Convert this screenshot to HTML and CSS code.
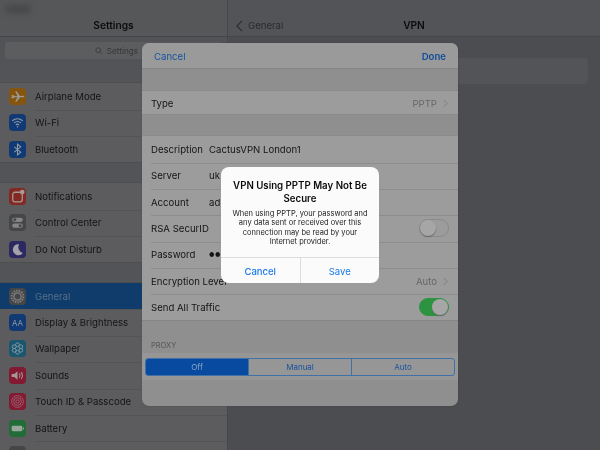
FILE: index.html
```html
<!DOCTYPE html>
<html lang="en">
<head>
<meta charset="utf-8">
<title>VPN Settings</title>
<link rel="stylesheet" href="styles.css">
</head>
<body>
<div class="screen">
  <aside class="sidebar">
    <div class="blob blob-left"></div>
    <header class="bar"><span class="bar-title">Settings</span></header>
    <div class="search-band">
      <div class="search">
        <svg class="search-icon" viewBox="0 0 10 10"><circle cx="4" cy="4" r="3" fill="none" stroke="#3a3a3c" stroke-width="1"/><path d="M6.2 6.2 9 9" stroke="#3a3a3c" stroke-width="1"/></svg>
        <span>Settings</span>
      </div>
    </div>
    <ul class="group">
      <li class="item"><span class="ico c-orange"><svg viewBox="0 0 16 16"><path d="M2 7l2-.3 1.4 1L8 7.600 5.800 3h1.300l3.300 4.500 2.600-.1c1 0 1.500.3 1.500.7s-.5.7-1.500.7l-2.600-.1L7.100 13H5.800L8 8.500l-2.600.2-1.400 1-2-.4 1-1.200z" fill="#9c9a94"/></svg></span><span class="lbl">Airplane Mode</span></li>
      <li class="item"><span class="ico c-blue"><svg viewBox="0 0 16 16" fill="none" stroke="#909ba6" stroke-width="1"><path d="M3 6.500c3-2.600 7-2.600 10 0M4.700 8.400c2-1.700 4.600-1.700 6.600 0M6.400 10.200c1-.8 2.200-.8 3.200 0"/><circle cx="8" cy="12" r=".7" fill="#909ba6" stroke="none"/></svg></span><span class="lbl">Wi-Fi</span></li>
      <li class="item"><span class="ico c-blue"><svg viewBox="0 0 16 16" fill="none" stroke="#909ba6" stroke-width="1"><path d="M5 5.500l6 5-3 2.500V3l3 2.500-6 5"/></svg></span><span class="lbl">Bluetooth</span></li>
    </ul>
    <ul class="group">
      <li class="item"><span class="ico c-red"><svg viewBox="0 0 16 16"><rect x="3.500" y="4" width="9" height="9" rx="2" fill="none" stroke="#a59a98" stroke-width="1.200"/><circle cx="12.500" cy="3.800" r="2.200" fill="#a59a98"/></svg></span><span class="lbl">Notifications</span></li>
      <li class="item"><span class="ico c-grey"><svg viewBox="0 0 16 16"><rect x="3" y="3.500" width="10" height="4" rx="2" fill="#858585"/><circle cx="5.500" cy="5.500" r="1.400" fill="#47484b"/><rect x="3" y="9" width="10" height="4" rx="2" fill="#858585"/><circle cx="10.500" cy="11" r="1.400" fill="#47484b"/></svg></span><span class="lbl">Control Center</span></li>
      <li class="item"><span class="ico c-indigo"><svg viewBox="0 0 16 16"><path d="M9.500 3a5.200 5.200 0 1 0 3.600 8.200A5.500 5.500 0 0 1 9.500 3z" fill="#a3a2aa"/></svg></span><span class="lbl">Do Not Disturb</span></li>
    </ul>
    <ul class="group">
      <li class="item item-active"><span class="ico c-grey"><svg viewBox="0 0 16 16" fill="none" stroke="#808080"><circle cx="8" cy="8" r="3.400" stroke-width="1.200"/><circle cx="8" cy="8" r="5.500" stroke-width="1.800" stroke-dasharray="1.400 1"/></svg></span><span class="lbl">General</span></li>
      <li class="item"><span class="ico c-blue"><svg viewBox="0 0 16 16"><text x="8" y="11" text-anchor="middle" class="ico-text" fill="#9099a5">AA</text></svg></span><span class="lbl">Display &amp; Brightness</span></li>
      <li class="item"><span class="ico c-teal"><svg viewBox="0 0 16 16" fill="none" stroke="#7f979f" stroke-width=".9"><circle cx="8" cy="4.500" r="1.800"/><circle cx="8" cy="11.500" r="1.800"/><circle cx="4.900" cy="6.300" r="1.800"/><circle cx="11.100" cy="6.300" r="1.800"/><circle cx="4.900" cy="9.700" r="1.800"/><circle cx="11.100" cy="9.700" r="1.800"/></svg></span><span class="lbl">Wallpaper</span></li>
      <li class="item"><span class="ico c-crimson"><svg viewBox="0 0 16 16"><path d="M2.500 6.500H5L8 4v8L5 9.500H2.500z" fill="#a5979a"/><path d="M9.800 6c.8 1.200.8 2.800 0 4M11.500 4.800c1.400 2 1.400 4.400 0 6.400" fill="none" stroke="#a5979a"/></svg></span><span class="lbl">Sounds</span></li>
      <li class="item"><span class="ico c-crimson"><svg viewBox="0 0 16 16" fill="none" stroke="#9a6270" stroke-width=".9"><circle cx="8" cy="8" r="5.500"/><circle cx="8" cy="8" r="3.600"/><circle cx="8" cy="8" r="1.600"/></svg></span><span class="lbl">Touch ID &amp; Passcode</span></li>
      <li class="item"><span class="ico c-green"><svg viewBox="0 0 16 16"><rect x="2.500" y="5.500" width="10" height="5" rx="1" fill="#9aa69a"/><rect x="13" y="7" width="1" height="2" fill="#9aa69a"/></svg></span><span class="lbl">Battery</span></li>
      <li class="item"><span class="ico c-grey"></span></li>
    </ul>
  </aside>

  <main class="detail">
    <div class="blob blob-right"></div>
    <header class="bar detail-bar">
      <span class="back"><svg class="back-chevron" viewBox="0 0 8 14"><path d="M7 1 1 7l6 6" fill="none" stroke="#2e2f31" stroke-width="1.500"/></svg>General</span>
      <span class="bar-title">VPN</span>
    </header>
    <div class="detail-row"></div>
  </main>

  <section class="sheet">
    <header class="sheet-nav"><span class="link">Cancel</span><span class="link link-strong">Done</span></header>
    <div class="sheet-row sheet-type"><span class="field">Type</span><span class="value">PPTP<svg class="chev" viewBox="0 0 6 10"><path d="M1 1l4 4-4 4" fill="none" stroke="#777" stroke-width="1"/></svg></span></div>
    <div class="sheet-group">
      <div class="sheet-row"><span class="field">Description</span><span class="entry">CactusVPN London1</span></div>
      <div class="sheet-row"><span class="field">Server</span><span class="entry">uk</span></div>
      <div class="sheet-row"><span class="field">Account</span><span class="entry">ad</span></div>
      <div class="sheet-row"><span class="field">RSA SecurID</span><span class="switch"><span class="knob"></span></span></div>
      <div class="sheet-row"><span class="field">Password</span><span class="entry entry-dots">●●</span></div>
      <div class="sheet-row"><span class="field">Encryption Level</span><span class="value">Auto<svg class="chev" viewBox="0 0 6 10"><path d="M1 1l4 4-4 4" fill="none" stroke="#777" stroke-width="1"/></svg></span></div>
      <div class="sheet-row"><span class="field">Send All Traffic</span><span class="switch switch-on"><span class="knob"></span></span></div>
    </div>
    <div class="proxy-label">PROXY</div>
    <div class="proxy-band">
      <div class="segments">
        <span class="seg seg-on">Off</span><span class="seg">Manual</span><span class="seg">Auto</span>
      </div>
    </div>
  </section>

  <section class="alert">
    <div class="alert-body">
      <h2 class="alert-title">VPN Using PPTP May Not Be Secure</h2>
      <p class="alert-text">When using PPTP, your password and any data sent or received over this connection may be read by your Internet provider.</p>
    </div>
    <div class="alert-actions"><span class="action">Cancel</span><span class="action">Save</span></div>
  </section>
</div>
</body>
</html>
```
FILE: styles.css
```css
* { box-sizing: border-box; }
html, body { margin: 0; padding: 0; background: #4c4d50; }
body { font-family: Inter, "Liberation Sans", sans-serif; }
ul { list-style: none; margin: 0; padding: 0; }

.screen {
  position: relative;
  width: 600px;
  height: 450px;
  overflow: hidden;
  display: flex;
  background: #4c4d50;
  color: #141415;
  font-size: 9.6px;
  filter: blur(0.3px);
}

.sidebar {
  position: relative;
  width: 228px;
  flex: none;
  background: #535457;
  border-right: 1px solid #47484a;
}
.detail { position: relative; flex: 1; }

.bar {
  height: 37px;
  padding-top: 14px;
  display: flex;
  justify-content: center;
  align-items: center;
  background: #565759;
  border-bottom: 1px solid #454648;
  font-size: 10.2px;
  font-weight: 600;
  color: #0c0c0c;
}
.bar-title { line-height: 23px; }
.detail-bar { position: relative; background: #535457; }
.back {
  position: absolute;
  left: 8px;
  top: 19px;
  display: flex;
  align-items: center;
  gap: 5px;
  color: #2a2b2d;
  font-size: 9.6px;
  font-weight: 400;
  line-height: 13px;
}
.back-chevron { width: 7px; height: 12px; }

.search-band { height: 26px; padding: 5px 5px 4px; background: #525356; }
.search {
  height: 17px;
  display: flex;
  justify-content: center;
  align-items: center;
  gap: 4px;
  padding-left: 6px;
  border-radius: 3px;
  background: #5c5d5f;
  color: #353638;
  font-size: 8.2px;
}
.search-icon { width: 8px; height: 8px; }

.group {
  margin-top: 18.7px;
  background: #5c5c5e;
  border-top: 1px solid #4d4e50;
  border-bottom: 1px solid #4d4e50;
}
.search-band + .group { margin-top: 19.3px; }

.item {
  height: 26.4px;
  display: flex;
  align-items: center;
  padding-left: 9px;
  gap: 9px;
}
.item + .item {
  background: linear-gradient(#535456, #535456) 35px 0 / 100% 1px no-repeat;
}
.item-active { background: #103c6c; }
.item-active .lbl { color: #567087; }

.ico {
  width: 17px;
  height: 17px;
  flex: none;
  border-radius: 4px;
  display: flex;
}
.ico svg { width: 100%; height: 100%; }
.ico-text { font-size: 7.500px; font-weight: 400; }
.c-orange { background: #855510; }
.c-blue { background: #113a74; }
.c-red { background: #842824; }
.c-grey { background: #454648; }
.c-indigo { background: #2c2962; }
.c-teal { background: #1b5670; }
.c-crimson { background: #821a32; }
.c-green { background: #216c37; }

.detail-row {
  height: 26px;
  margin: 21px 12px 0 0;
  background: #535457;
  border-radius: 3px;
}

.blob {
  position: absolute;
  top: 5px;
  height: 8px;
  border-radius: 4px;
  background: #46474a;
  filter: blur(3px);
}
.blob-left { left: 5px; width: 26px; }
.blob-right { right: 2px; width: 16px; top: 3px; }

.sheet {
  position: absolute;
  left: 142px;
  top: 43px;
  width: 316px;
  height: 363px;
  border-radius: 7px;
  background: #8f8f8f;
  overflow: hidden;
  box-shadow: 0 0 1px #3a3a3c;
}
.sheet-nav {
  height: 26px;
  display: flex;
  justify-content: space-between;
  align-items: center;
  padding: 1px 12px 0;
  background: #9a9a9a;
  border-bottom: 1px solid #858585;
}
.link { color: #14549f; }
.link-strong { font-weight: 600; color: #0f4c99; }

.sheet-row {
  height: 26.300px;
  display: flex;
  align-items: center;
  justify-content: flex-start;
  padding: 0 9px;
  background: #9c9c9c;
}
.sheet-type {
  margin-top: 21px;
  height: 25px;
  padding-top: 1px;
  justify-content: space-between;
  border-top: 1px solid #8b8b8b;
  border-bottom: 1px solid #8b8b8b;
}
.sheet-group {
  margin-top: 20.4px;
  border-top: 1px solid #8b8b8b;
  border-bottom: 1px solid #858585;
}
.sheet-group .sheet-row + .sheet-row {
  background: linear-gradient(#8d8d8d, #8d8d8d) 9px 0 / 100% 1px no-repeat, #9c9c9c;
}
.field { flex: none; width: 58px; white-space: nowrap; color: #141415; }
.sheet-type .field { width: auto; }
.entry { white-space: nowrap; color: #141415; }
.entry-dots { font-size: 6px; letter-spacing: 0.5px; }
.value {
  margin-left: auto;
  display: flex;
  align-items: center;
  gap: 6px;
  color: #666667;
}
.chev { width: 5px; height: 9px; margin-right: 1px; }

.switch {
  margin-left: auto;
  width: 30px;
  height: 18px;
  border-radius: 9px;
  border: 1px solid #8a8a8a;
  background: #9c9c9c;
  display: flex;
  align-items: center;
  justify-content: flex-start;
}
.switch-on { background: #2c9340; border-color: #2c9340; justify-content: flex-end; }
.knob {
  width: 16px;
  height: 16px;
  border-radius: 50%;
  background: #a6a6a6;
  box-shadow: 0 1px 1px #666;
}

.proxy-label {
  height: 32px;
  padding: 19px 0 0 9px;
  font-size: 7.500px;
  line-height: 12px;
  color: #565657;
}
.proxy-band {
  height: 27px;
  padding: 5px 3px;
  background: #969696;
}
.segments {
  height: 18px;
  display: flex;
  border: 1px solid #3f70a8;
  border-radius: 3px;
  overflow: hidden;
}
.seg {
  flex: 1;
  display: flex;
  justify-content: center;
  align-items: center;
  font-size: 8px;
  color: #1a52a0;
  border-left: 1px solid #3f70a8;
}
.seg:first-child { border-left: 0; }
.seg-on { background: #074a9f; color: #8ea6c4; }

.alert {
  position: absolute;
  left: 221px;
  top: 167px;
  width: 158px;
  height: 116px;
  border-radius: 8px;
  background: #fbfbfb;
  display: flex;
  flex-direction: column;
  text-align: center;
}
.alert-body { flex: 1; padding: 12px 8px 0; }
.alert-title {
  margin: 0 0 4px;
  font-size: 9.700px;
  font-weight: 600;
  line-height: 13px;
  color: #0c0c0c;
}
.alert-text {
  margin: 0 2px;
  font-size: 7.500px;
  line-height: 9.400px;
  color: #222;
}
.alert-actions {
  height: 26px;
  display: flex;
  border-top: 1px solid #dcdcdc;
}
.action {
  flex: 1;
  display: flex;
  justify-content: center;
  align-items: center;
  padding-top: 1px;
  color: #1a78ec;
  font-weight: 500;
  font-size: 9.500px;
}
.action + .action { border-left: 1px solid #dcdcdc; font-weight: 400; }
```
